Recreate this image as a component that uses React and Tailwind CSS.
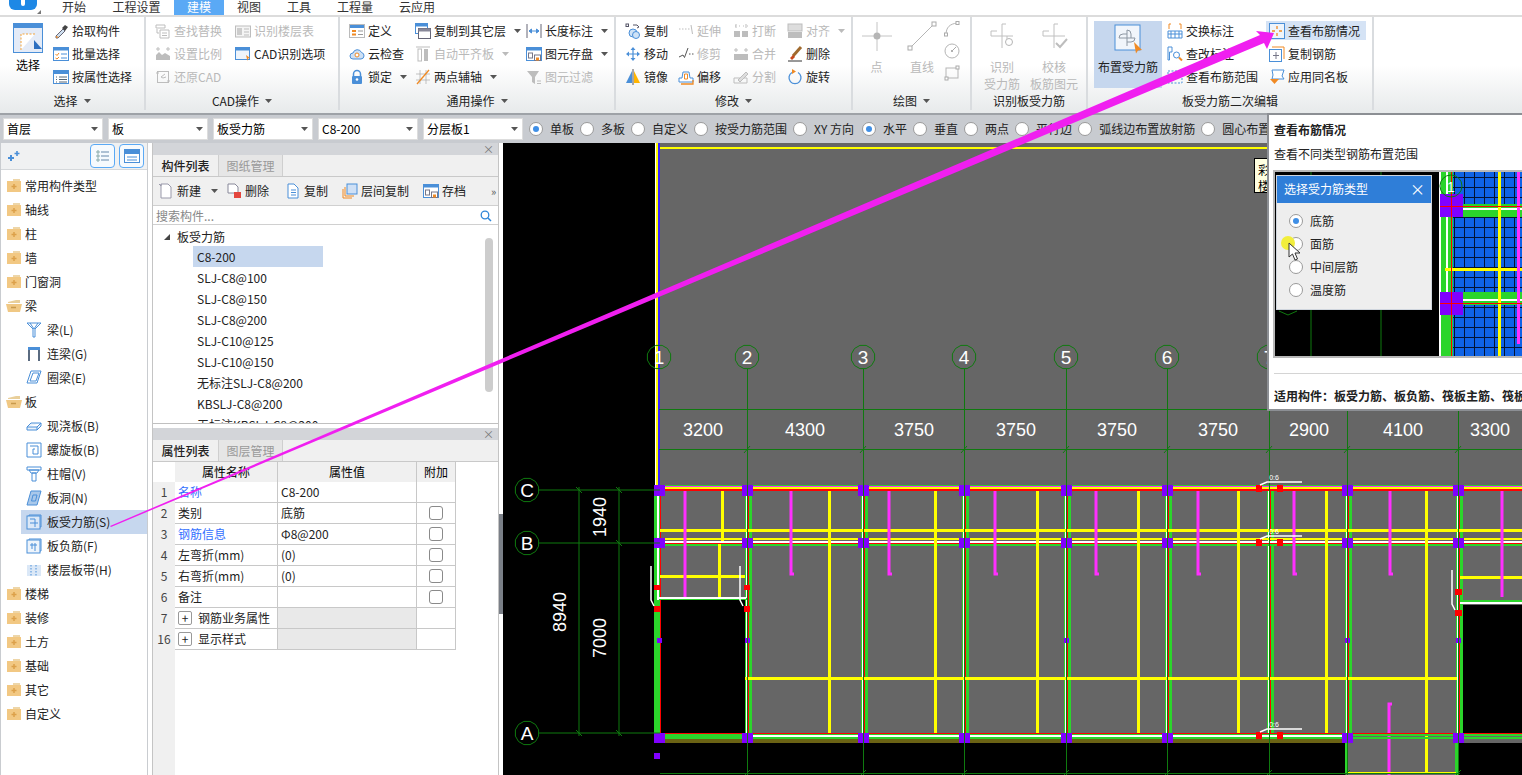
const B = "#4a8fd8";
const O = "#f08a24";
const G = "#bdbdbd";

const paths = {
  pick: <><path d="M3 13l7-7 2 2-7 7H3z" fill="#cfe0f0" stroke="#667" /><path d="M9 5l3-3 3 2-3 4z" fill="#444" /><path d="M3 13l3 1-3 1z" fill={O} /></>,
  batch: <><rect x=".5" y="1.5" width="15" height="13" fill="#fff" stroke={B} /><rect x=".5" y="1.5" width="15" height="3" fill={B} /><path d="M2.5 8l1.5 1.5L6 7M2.5 12l1.5 1L6 11" stroke={O} fill="none" /><path d="M8 8h6M8 12h6" stroke={B} /></>,
  attr: <><rect x=".5" y="1.5" width="15" height="13" fill="#fff" stroke={B} /><rect x=".5" y="1.5" width="15" height="3.5" fill={B} /><path d="M3 8h1M3 10.5h1M3 13h1M6 8h8M6 10.5h8M6 13h8" stroke="#567" /></>,
  find: <><path d="M1 2h9v3H1z" fill="none" stroke={G} /><path d="M5 7h9v8H5z" fill="none" stroke={G} /><path d="M7 10h5M7 12.500h5" stroke={G} /><path d="M2 6v4h2" stroke={G} fill="none" /></>,
  table: <><rect x=".5" y="3" width="15" height="11" fill="#f4f4f4" stroke={G} /><rect x="2" y="5" width="5" height="7" fill="#ccc" /><path d="M9 6h5M9 9h5M9 12h5" stroke={G} /></>,
  scale: <><path d="M1 14V9l3-3 3 3 3-2 5 3v4z" fill={G} /><path d="M1 3h4M11 3h4M3 1v4M13 1v4" stroke={G} /></>,
  cadopt: <><rect x=".5" y="1.500" width="14" height="12" fill="#eef4fb" stroke={B} /><rect x=".5" y="1.500" width="14" height="3" fill={B} /><path d="M11 9l4 3-2 .5-.5 2.500z" fill={O} /></>,
  restore: <><rect x="2.500" y="2.500" width="11" height="11" fill="none" stroke={G} /><path d="M1 4h3M12 12h3M10 5L6 8l2 1 3-1" stroke={G} fill="none" /></>,
  define: <><rect x=".5" y="1.500" width="15" height="13" fill="#fff" stroke="#bbb" /><rect x="1" y="2" width="14" height="3" fill={B} /><rect x="3" y="7" width="4" height="2" fill={O} /><rect x="3" y="10.500" width="4" height="2" fill={O} /><path d="M9 8h5M9 11.500h5" stroke="#999" /></>,
  cloud: <><path d="M4 13a3 3 0 010-6 4.500 4.500 0 018.500-.5 3.300 3.300 0 01-.5 6.500z" fill="#cde0f5" stroke={B} /><circle cx="8" cy="9" r="2" fill="#fff" stroke={O} /></>,
  lock: <><path d="M4.500 7V5a3.500 3.500 0 017 0v2" fill="none" stroke={B} strokeWidth="1.500" /><rect x="3" y="7" width="10" height="8" rx="1" fill={B} /><circle cx="8" cy="10.500" r="1.300" fill="#fff" /></>,
  copyf: <><rect x=".5" y=".5" width="12" height="10" fill="#fff" stroke={B} /><rect x=".5" y=".5" width="12" height="3" fill={B} /><rect x="3.500" y="5.500" width="12" height="10" fill="#fff" stroke="#667" /><rect x="3.500" y="5.500" width="12" height="3" fill="#889" /></>,
  align: <><path d="M1 1h14" stroke={G} /><rect x="3" y="3" width="3.500" height="12" fill="#fff" stroke={G} /><rect x="9" y="3" width="4" height="12" fill={G} /></>,
  axis: <><path d="M1 5h14M1 11h14M5 1v14M11 1v14" stroke="#aaa" strokeWidth=".7" /><path d="M2 15L14 1" stroke={O} strokeWidth="1.300" /></>,
  dim: <><path d="M1 1v14M15 1v14" stroke="#667" /><path d="M3 8h10M3 8l2.500-2v4zM13 8l-2.500-2v4z" fill={B} stroke={B} /></>,
  save: <><rect x=".5" y="1.500" width="15" height="13" fill="#fff" stroke={B} /><rect x=".5" y="1.500" width="15" height="3" fill={B} /><rect x="2.500" y="7" width="4" height="5" fill="none" stroke="#778" /><rect x="8.500" y="9" width="6" height="5.500" fill="#fff" stroke="#778" /><rect x="10" y="11.500" width="3" height="3" fill={O} /></>,
  filter: <><path d="M1 2h12L9 8v7l-3-2V8z" fill={G} /><path d="M11 12h4M11 14.500h4" stroke={G} /></>,
  copy: <><circle cx="8" cy="10" r="4" fill="#cfe3f7" stroke={B} /><circle cx="11" cy="12" r="3.500" fill="#cfe3f7" stroke={B} /><rect x="1" y="1" width="2.500" height="2.500" fill="none" stroke="#556" /><path d="M8 2h4l2 2M14 4l-2 1" stroke="#556" fill="none" /></>,
  extend: <path d="M1 6h1.500M4 6h1.500M7 6h1.500M10 6h1.500M13 2l1.500 9" stroke={G} fill="none" />,
  trim: <path d="M1 11l4-2 1.500 2.500L10 2M11 8h1.500M14 8h1.500" stroke="#555" fill="none" />,
  brk: <><path d="M2 3h1M6 3h1M10 3h1M14 3h1M3 1v4M13 1v4" stroke={G} /><rect x="1" y="8" width="6" height="6" fill={G} /><rect x="9" y="8" width="6" height="6" fill={G} /></>,
  merge: <><path d="M3 2v4M13 2v4M1 4h4M11 4h4" stroke={G} /><rect x="1" y="8" width="14" height="6" fill={G} /></>,
  alignr: <><rect x="1" y="1" width="14" height="7" fill="#ddd" stroke={G} /><rect x="1" y="9" width="14" height="6" fill={G} /></>,
  del: <><path d="M14 1L6 10" stroke="#a06a2e" strokeWidth="3" /><path d="M6 9l2 2-3 3-2-2z" fill="#c8491c" /><path d="M1 15h14" stroke="#333" /></>,
  move: <><path d="M8 1l2.500 3h-5zM8 15l2.500-3h-5zM1 8l3-2.500v5zM15 8l-3-2.500v5z" fill={B} /><path d="M4 8h8M8 4v8" stroke={B} strokeWidth="1.200" /></>,
  mirror: <><path d="M7 2v12H1z" fill={B} /><path d="M9 2v12h6z" fill="#ffb400" /><path d="M8 0v16" stroke="#555" /></>,
  offset: <><path d="M1 13V9h3l1-6h6l1 6h3v4z" fill="#fff" stroke={B} /><path d="M3 15h12V11" fill="none" stroke={O} strokeWidth="1.300" /><path d="M6.500 5h3v5h-3z" fill="none" stroke={O} /></>,
  split: <><path d="M1 9h13v5H1z" fill="none" stroke={G} /><path d="M5 11L13 3l2 2-8 8z" fill="#ddd" stroke={G} /></>,
  rotate: <><path d="M5 3.500a6 6 0 106 0" fill="none" stroke={B} strokeWidth="1.300" /><path d="M5 0l4 2.500-4 2.500z" fill={O} /></>,
  swap: <><path d="M1 8h14v7H1zM1 11h14M4 8v7M8 8v7M12 8v7" fill="#fff" stroke={B} /><path d="M2 6V1h2M14 6V1h-2" stroke={O} fill="none" /></>,
  chk: <><path d="M1 1h4v5H2.500v8H1z" fill="#fff" stroke={B} /><circle cx="9.500" cy="9" r="3" fill="#fff" stroke={B} /><path d="M12 11.500l3 3" stroke={O} strokeWidth="2" /></>,
  range: <><rect x="1" y="2" width="14" height="12" fill="none" stroke={B} strokeDasharray="2 1.500" /><path d="M8 5v6M5 8h6" stroke="#889" /></>,
  view: <><rect x=".5" y=".5" width="15" height="15" fill="#eef4fb" stroke={B} /><path d="M8 3v3M8 10v3M3 8h3M10 8h3" stroke={O} strokeWidth="1.300" /></>,
  copyr: <><path d="M3 1h12v12" fill="none" stroke={O} /><rect x=".5" y="3.500" width="12" height="12" fill="#fff" stroke={B} /><path d="M7 6v7M4 9.500h6" stroke="#778" /></>,
  apply: <><path d="M3 1h12l-2 6 2 3H3l1-4z" fill="#fff" stroke={B} /><path d="M1 10h9l-4.500 5z" fill={O} /></>,
};

function Icon({ name }) {
  return (
    <svg viewBox="0 0 16 16" className="w-4 h-4 shrink-0">
      {paths[name]}
    </svg>
  );
}

function Caret({ color = "#555" }) {
  return (
    <svg width="7" height="4" className="shrink-0">
      <path d="M0 0h7L3.500 4z" fill={color} />
    </svg>
  );
}

function Item({ icon, label, off, caret, active }) {
  return (
    <div className={`flex items-center gap-[3px] whitespace-nowrap ${off ? "text-[#b9b9b9]" : "text-[#222]"} ${active ? "bg-[#d5e3f5] -ml-[3px] pl-[3px] w-[100px] h-[19px] my-[2px]" : "h-[23px]"}`}>
      <Icon name={icon} />
      <span>{label}</span>
      {caret && <span className="ml-[5px] flex"><Caret color={off ? "#bbb" : "#555"} /></span>}
    </div>
  );
}

function Col({ w, items }) {
  return (
    <div className={`flex flex-col pt-[2px] ${w}`}>
      {items.map((it) => (
        <Item key={it.label} {...it} />
      ))}
    </div>
  );
}

function Group({ w, label, caret = true, children }) {
  return (
    <div className={`${w} h-[93px] border-r-2 border-[#d9dcdf] flex flex-col shrink-0`}>
      <div className="h-[75px] flex">{children}</div>
      <div className="h-[18px] flex items-center justify-center gap-[6px] text-[#222]">
        <span>{label}</span>
        {caret && <Caret />}
      </div>
    </div>
  );
}

function BigDraw({ w, label, children, off = true }) {
  return (
    <div className={`${w} flex flex-col items-center pt-[4px] ${off ? "text-[#b9b9b9]" : "text-[#222]"}`}>
      <svg width="34" height="32" viewBox="0 0 34 32" className="shrink-0">
        {children}
      </svg>
      <div className="mt-[5px] leading-[17px] text-center whitespace-pre-line">{label}</div>
    </div>
  );
}

function Ribbon() {
  return (
    <div className="h-[98px] flex border-t-2 border-[#dcdcdc] bg-gradient-to-b from-white via-white to-[#e7eaeb] shrink-0">
      <Group w="w-[146px]" label="选择">
        <div className="w-[53px] pl-[3px] pt-[6px] flex flex-col items-center">
          <svg width="30" height="30" viewBox="0 0 30 30" className="shrink-0">
            <rect x=".5" y=".5" width="29" height="29" fill="#e4ebf7" stroke={B} />
            <rect x="1" y="1" width="28" height="4" fill={B} />
            <path d="M8 27V11h14" fill="#fff" stroke="#f3a33a" strokeDasharray="2 1.500" />
            <path d="M21 17l8 9h-8z" fill="#2d6fc0" />
          </svg>
          <span className="mt-[6px]">选择</span>
        </div>
        <Col w="w-[90px]" items={[{ icon: "pick", label: "拾取构件" }, { icon: "batch", label: "批量选择" }, { icon: "attr", label: "按属性选择" }]} />
      </Group>
      <Group w="w-[194px]" label="CAD操作">
        <div className="w-[9px]" />
        <Col w="w-[80px]" items={[{ icon: "find", label: "查找替换", off: true }, { icon: "scale", label: "设置比例", off: true }, { icon: "restore", label: "还原CAD", off: true }]} />
        <Col w="w-[100px]" items={[{ icon: "table", label: "识别楼层表", off: true }, { icon: "cadopt", label: "CAD识别选项" }]} />
      </Group>
      <Group w="w-[276px]" label="通用操作">
        <div className="w-[9px]" />
        <Col w="w-[66px]" items={[{ icon: "define", label: "定义" }, { icon: "cloud", label: "云检查" }, { icon: "lock", label: "锁定", caret: true }]} />
        <Col w="w-[111px]" items={[{ icon: "copyf", label: "复制到其它层", caret: true }, { icon: "align", label: "自动平齐板", off: true, caret: true }, { icon: "axis", label: "两点辅轴", caret: true }]} />
        <Col w="w-[88px]" items={[{ icon: "dim", label: "长度标注", caret: true }, { icon: "save", label: "图元存盘", caret: true }, { icon: "filter", label: "图元过滤", off: true }]} />
      </Group>
      <Group w="w-[237px]" label="修改">
        <div className="w-[9px]" />
        <Col w="w-[53px]" items={[{ icon: "copy", label: "复制" }, { icon: "move", label: "移动" }, { icon: "mirror", label: "镜像" }]} />
        <Col w="w-[55px]" items={[{ icon: "extend", label: "延伸", off: true }, { icon: "trim", label: "修剪", off: true }, { icon: "offset", label: "偏移" }]} />
        <Col w="w-[54px]" items={[{ icon: "brk", label: "打断", off: true }, { icon: "merge", label: "合并", off: true }, { icon: "split", label: "分割", off: true }]} />
        <Col w="w-[60px]" items={[{ icon: "alignr", label: "对齐", off: true, caret: true }, { icon: "del", label: "删除" }, { icon: "rotate", label: "旋转" }]} />
      </Group>
      <Group w="w-[119px]" label="绘图">
        <BigDraw w="w-[47px]" label="点">
          <path d="M2 15h30M17 1v29" stroke="#c4c4c4" />
          <circle cx="17" cy="15" r="3.500" fill="#b5b5b5" />
        </BigDraw>
        <BigDraw w="w-[44px]" label="直线">
          <path d="M5 27L29 3" stroke="#b5b5b5" />
          <rect x="3" y="25" width="4" height="4" fill="#fff" stroke="#aaa" />
          <rect x="27" y="1" width="4" height="4" fill="#fff" stroke="#aaa" />
        </BigDraw>
        <div className="w-[20px] flex flex-col gap-[6px] pt-[4px]">
          <svg width="16" height="16" viewBox="0 0 16 16"><path d="M2 14C2 6 6 3 13 2" fill="none" stroke="#b5b5b5" /><rect x="12" y="0.500" width="3" height="3" fill="#fff" stroke="#aaa" /><rect x="0.500" y="12" width="3" height="3" fill="#fff" stroke="#aaa" /></svg>
          <svg width="16" height="16" viewBox="0 0 16 16"><circle cx="8" cy="8" r="7" fill="none" stroke="#b5b5b5" /><circle cx="8" cy="8" r="1" fill="#999" /><path d="M8 8l4-4" stroke="#aaa" /></svg>
          <svg width="16" height="16" viewBox="0 0 16 16"><rect x="2" y="3" width="12" height="10" fill="none" stroke="#b5b5b5" /><rect x="12" y="1" width="3" height="3" fill="#fff" stroke="#aaa" /><rect x="1" y="12" width="3" height="3" fill="#fff" stroke="#aaa" /></svg>
        </div>
      </Group>
      <Group w="w-[116px]" label="识别板受力筋" caret={false}>
        <div className="w-[4px]" />
        <BigDraw w="w-[52px]" label={"识别\n受力筋"}>
          <path d="M17 3v24M6 15h22M17 3h4M6 15v-5h6M22 15v8" stroke="#c0c0c0" fill="none" />
          <circle cx="24" cy="21" r="3.500" fill="#fff" stroke="#b5b5b5" />
        </BigDraw>
        <BigDraw w="w-[52px]" label={"校核\n板筋图元"}>
          <path d="M17 3v24M6 15h22M17 3h4M6 15v-5h6" stroke="#c0c0c0" fill="none" />
          <path d="M19 22l4 4 7-8" stroke="#bdbdbd" strokeWidth="2" fill="none" />
        </BigDraw>
      </Group>
      <Group w="w-[286px]" label="板受力筋二次编辑" caret={false}>
        <div className="ml-[6px] mt-[4px] w-[68px] h-[67px] bg-[#c6d7ee] flex flex-col items-center pt-[3px] text-[#222] shrink-0">
          <svg width="30" height="30" viewBox="0 0 30 30" className="shrink-0 overflow-visible">
            <rect x="2" y="1" width="25" height="25" fill="#f1f5fb" stroke={B} />
            <path d="M14 6v16M6 14h16M14 6a4 4 0 014 4v4M6 14a4 4 0 014-4h4M22 14a4 4 0 01-4 4h-4" fill="none" stroke="#8d97a3" />
            <path d="M21 18l8 8-4 .5-2 3z" fill={O} />
          </svg>
          <span className="mt-[7px]">布置受力筋</span>
        </div>
        <div className="w-[5px]" />
        <Col w="w-[102px]" items={[{ icon: "swap", label: "交换标注" }, { icon: "chk", label: "查改标注" }, { icon: "range", label: "查看布筋范围" }]} />
        <Col w="w-[100px]" items={[{ icon: "view", label: "查看布筋情况", active: true }, { icon: "copyr", label: "复制钢筋" }, { icon: "apply", label: "应用同名板" }]} />
      </Group>
      <div className="flex-1" />
    </div>
  );
}

function Radio({ on }) {
  return (
    <span className="w-[14px] h-[14px] rounded-full bg-white border border-[#9a9a9a] flex items-center justify-center shrink-0">
      {on ? <span className="w-[6px] h-[6px] rounded-full bg-[#3f8fe6]" /> : null}
    </span>
  );
}

function Toolbar() {
  const selects = ["首层", "板", "板受力筋", "C8-200", "分层板1"];
  const radios = [["单板", true], ["多板"], ["自定义"], ["按受力筋范围"], ["XY 方向", false, "w-[42px]"], ["水平", true], ["垂直"], ["两点"], ["平行边"], ["弧线边布置放射筋"], ["圆心布置放射筋"]];
  return (
    <div className="h-[30px] bg-[#c8cbd0] border-t-2 border-[#9ea2a7] flex items-center pl-[3px] shrink-0 overflow-hidden">
      <div className="flex gap-[5px] mr-[6px]">
        {selects.map((s) => (
          <div key={s} className="w-[100px] h-[22px] bg-white border border-[#dddddd] flex items-center justify-between pl-[3px] pr-[4px]">
            <span>{s}</span>
            <Caret />
          </div>
        ))}
      </div>
      <div className="w-[738px] flex gap-[6px] whitespace-nowrap overflow-hidden">
        {radios.map(([r, on, w]) => (
          <div key={r} className="flex items-center gap-[7px]">
            <Radio on={on} />
            <span className={`text-[#222] ${w || ""}`}>{r}</span>
          </div>
        ))}
      </div>
    </div>
  );
}

function Folder({ open }) {
  return open ? (
    <svg width="16" height="14" viewBox="0 0 16 14" className="shrink-0">
      <path d="M2 3l8-2h4v3H2z" fill="#e9cf9a" />
      <path d="M0 5h16l-2 8H2z" fill="#f0c884" />
      <path d="M5 8.500h5" stroke="#c99a4c" strokeWidth="1.500" />
    </svg>
  ) : (
    <svg width="16" height="14" viewBox="0 0 16 14" className="shrink-0">
      <path d="M7 0h7v3H7z" fill="#eed6a8" />
      <rect x="1" y="2" width="14" height="11" fill="#f2c883" />
      <path d="M8 5v5M5.500 7.500h5" stroke="#dca04a" strokeWidth="1.500" />
    </svg>
  );
}

const treeIcons = {
  "梁(L)": <path d="M1 1h14L9 7v8H7V7zM4 1l4 6 4-6" fill="none" stroke={B} />,
  "连梁(G)": <><rect x="2" y="1" width="12" height="3" fill={B} /><path d="M3 4v11M13 4v11" stroke="#5a6b80" strokeWidth="2" /></>,
  "圈梁(E)": <path d="M5 1h10l-4 12H1zM7 3h6l-3 8H4z" fill="#fff" stroke={B} fillRule="evenodd" />,
  "现浇板(B)": <path d="M1 9l4-4h10v3l-4 4H1zM1 9h10l4-4M11 9v3" fill="#eaf2fb" stroke={B} />,
  "螺旋板(B)": <path d="M1 1h14v14H1zM4 4h8v8H7V7h2" fill="none" stroke={B} />,
  "柱帽(V)": <path d="M1 1h14v3H1zM3 4h10l-2 3H5zM6 7h4v8H6z" fill="#fff" stroke={B} />,
  "板洞(N)": <path d="M5 1h10l-4 14H1zM7 5h4l-1.500 6h-4z" fill="#a9c8ea" stroke={B} />,
  "板受力筋(S)": <><rect x="1" y="2" width="13" height="13" fill="#dbe8f7" stroke={B} /><path d="M3 2V1h12v12h-1M4 9h8M9 5v8M4 5h5" stroke={B} fill="none" /></>,
  "板负筋(F)": <><rect x="1" y="2" width="13" height="13" fill="#eef4fb" stroke={B} /><path d="M3 2V1h12v12h-1M4 7h7M6 5v6M9 5v8" stroke={B} fill="none" /></>,
  "楼层板带(H)": <><rect x="1" y="3" width="14" height="11" fill="#dbe8f7" /><path d="M5 3v11M10 3v11" stroke={B} strokeDasharray="1.500 1.500" /></>,
};

function TreeRow({ label, folder, open }) {
  const selected = label === "板受力筋(S)";
  if (folder) {
    return (
      <div className="h-[24px] flex items-center gap-[3px] pl-[5px]">
        <Folder open={open} />
        <span className="text-[#222]">{label}</span>
      </div>
    );
  }
  return (
    <div className={`h-[24px] ml-[20px] flex items-center gap-[5px] pl-[5px] ${selected ? "bg-[#c6d7ee]" : ""}`}>
      <svg viewBox="0 0 16 16" className="w-4 h-4 shrink-0">{treeIcons[label]}</svg>
      <span className="text-[#222]">{label}</span>
    </div>
  );
}

function Sidebar() {
  const rows = [["常用构件类型", 1], ["轴线", 1], ["柱", 1], ["墙", 1], ["门窗洞", 1], ["梁", 1, 1], ["梁(L)"], ["连梁(G)"], ["圈梁(E)"], ["板", 1, 1], ["现浇板(B)"], ["螺旋板(B)"], ["柱帽(V)"], ["板洞(N)"], ["板受力筋(S)"], ["板负筋(F)"], ["楼层板带(H)"], ["楼梯", 1], ["装修", 1], ["土方", 1], ["基础", 1], ["其它", 1], ["自定义", 1]];
  return (
    <div className="w-[148px] h-full border-l border-r border-[#c9ccd0] bg-white shrink-0">
      <div className="h-[27px] bg-[#f0f1f2] border-b border-[#d5d8db] flex items-center justify-between pl-[6px] pr-[3px]">
        <svg width="14" height="12" viewBox="0 0 14 12">
          <path d="M4 5v6M1 8h6" stroke={B} strokeWidth="2" />
          <path d="M10 1v5M7.500 3.500h5" stroke={B} strokeWidth="1.600" />
        </svg>
        <div className="flex gap-[4px]">
          <div className="w-[25px] h-[24px] rounded-[4px] border border-[#5aa9f5] bg-[#f6fafe] flex items-center justify-center">
            <svg width="14" height="14" viewBox="0 0 14 14"><path d="M1 2h2v2H1zM1 6h2v2H1zM1 10h2v2H1z" fill="none" stroke="#8aa" /><path d="M5 3h8M5 7h8M5 11h8" stroke="#68a" /></svg>
          </div>
          <div className="w-[25px] h-[24px] rounded-[4px] border border-[#5aa9f5] bg-[#f6fafe] flex items-center justify-center">
            <svg width="16" height="14" viewBox="0 0 16 14"><rect x=".5" y=".5" width="15" height="13" fill="#fff" stroke={B} /><rect x="1" y="1" width="14" height="4" fill={B} /><path d="M3 8h10M3 11h10" stroke={B} /></svg>
          </div>
        </div>
      </div>
      <div className="pt-[4px]">
        {rows.map(([l, f, o]) => (
          <TreeRow key={l} label={l} folder={f} open={o} />
        ))}
      </div>
    </div>
  );
}

function PanelHead({ tabs }) {
  return (
    <>
      <div className="h-[12px] bg-[#d3d5d9] flex items-center justify-end pr-[4px] text-[#777] text-[11px] leading-none shrink-0">×</div>
      <div className="h-[22px] bg-[#f0f0f0] border-b border-[#c9c9c9] flex shrink-0">
        <div className="w-[65px] flex items-center justify-center font-medium text-[#222]">{tabs[0]}</div>
        <div className="w-[65px] border-l border-r border-[#cfcfcf] bg-[#e6e6e6] flex items-center justify-center text-[#999]">{tabs[1]}</div>
      </div>
    </>
  );
}

function ListPanel() {
  const items = ["C8-200", "SLJ-C8@100", "SLJ-C8@150", "SLJ-C8@200", "SLJ-C10@125", "SLJ-C10@150", "无标注SLJ-C8@200", "KBSLJ-C8@200", "无标注KBSLJ-C8@200"];
  const tools = [
    ["新建", "w-[68px]", <path d="M3 1h7l3 3v11H3zM1 1l2 2M3 1v2" fill="#fff" stroke="#99a" />, true],
    ["删除", "w-[59px]", <><path d="M2 1h7l3 3v6H2z" fill="#fff" stroke="#889" /><rect x="8" y="9" width="7" height="6" fill="#e4463e" /></>],
    ["复制", "w-[57px]", <path d="M3 1h6l4 4v10H3zM6 7h5M6 9.500h5M6 12h5" fill="#fff" stroke={B} />],
    ["层间复制", "w-[81px]", <><rect x="5" y="1" width="10" height="10" fill="#cfe0f5" stroke={B} /><path d="M1 6v9h9M3 4v9h9" fill="none" stroke={O} /></>],
    ["存档", "w-[68px]", paths.save],
  ];
  return (
    <div className="h-[281px] flex flex-col border-b border-[#c0c0c0] bg-white shrink-0">
      <PanelHead tabs={["构件列表", "图纸管理"]} />
      <div className="h-[29px] bg-[#f0f0f0] border-b border-[#d0d0d0] flex items-center pl-[5px] shrink-0">
        {tools.map(([l, w, ic, c]) => (
          <div key={l} className={`${w} flex items-center gap-[3px] text-[#222]`}>
            <svg viewBox="0 0 16 16" className="w-4 h-4 shrink-0">{ic}</svg>
            <span>{l}</span>
            {c && <span className="ml-[7px] flex"><Caret /></span>}
          </div>
        ))}
        <span className="text-[#555] text-[11px] leading-none">»</span>
      </div>
      <div className="h-[19px] border-b border-[#d0d0d0] flex items-center justify-between pl-[3px] pr-[6px] pt-[2px] text-[#888] shrink-0">
        <span>搜索构件...</span>
        <svg width="12" height="12" viewBox="0 0 12 12"><circle cx="5" cy="5" r="3.800" fill="none" stroke="#2f86d8" strokeWidth="1.300" /><path d="M8 8l3 3" stroke="#2f86d8" strokeWidth="1.500" /></svg>
      </div>
      <div className="flex-1 relative overflow-hidden text-[#222]">
        <div className="h-[21px] pt-[3px] flex items-center pl-[11px] gap-[7px]">
          <svg width="6" height="6"><path d="M6 0v6H0z" fill="#444" /></svg>
          <span>板受力筋</span>
        </div>
        {items.map((t, i) => (
          <div key={t} className={`h-[21px] ml-[40px] w-[130px] pl-[4px] flex items-center whitespace-nowrap ${i === 0 ? "bg-[#c6d7ee]" : ""}`}>{t}</div>
        ))}
        <div className="absolute right-[5px] top-[13px] w-[8px] h-[154px] rounded-[4px] bg-[#cdcdcd]" />
      </div>
    </div>
  );
}

function PropRow({ no, name, value, blue, box, group }) {
  return (
    <div className="h-[21px] flex">
      <div className="w-[22px] shrink-0 bg-[#f0f0f0] flex items-center justify-center text-[#444] border-b border-[#f0f0f0]">{no}</div>
      <div className={`w-[103px] shrink-0 border-b border-r border-[#c8c8c8] flex items-center pl-[3px] ${blue ? "text-[#3370ff]" : "text-[#222]"}`}>
        {group && <span className="w-[14px] h-[14px] mr-[6px] border border-[#999] rounded-[2px] flex items-center justify-center leading-none">+</span>}
        {name}
      </div>
      <div className={`w-[139px] shrink-0 border-b border-r border-[#c8c8c8] flex items-center pl-[3px] text-[#222] ${group ? "bg-[#e9e9e9]" : ""}`}>{value}</div>
      <div className="w-[39px] shrink-0 border-b border-r border-[#c8c8c8] flex items-center justify-center">
        {box && <span className="w-[14px] h-[14px] rounded-[3px] border border-[#8a8a8a] bg-white" />}
      </div>
    </div>
  );
}

function PropPanel() {
  return (
    <div className="flex-1 flex flex-col bg-white min-h-0">
      <PanelHead tabs={["属性列表", "图层管理"]} />
      <div className="h-[20px] flex shrink-0">
        <div className="w-[22px] bg-white" />
        <div className="w-[103px] bg-[#f0f0f0] border-r border-[#c8c8c8] flex items-center justify-center">属性名称</div>
        <div className="w-[139px] bg-[#f0f0f0] border-r border-[#c8c8c8] flex items-center justify-center">属性值</div>
        <div className="w-[39px] bg-[#f0f0f0] border-r border-[#c8c8c8] flex items-center justify-center">附加</div>
      </div>
      <PropRow no="1" name="名称" value="C8-200" blue />
      <PropRow no="2" name="类别" value="底筋" box />
      <PropRow no="3" name="钢筋信息" value="Φ8@200" blue box />
      <PropRow no="4" name="左弯折(mm)" value="(0)" box />
      <PropRow no="5" name="右弯折(mm)" value="(0)" box />
      <PropRow no="6" name="备注" value="" box />
      <PropRow no="7" name="钢筋业务属性" value="" group />
      <PropRow no="16" name="显示样式" value="" group />
      <div className="flex-1 w-[22px] bg-[#f0f0f0]" />
    </div>
  );
}

const AX = [747, 863, 964, 1066, 1167, 1269, 1347, 1458];
const YEL = [829, 935, 1037, 1138, 1238, 1326];
const MAG = [791, 889, 995, 1096, 1198, 1294, 1390];
const DIMS = [[703, "3200"], [805, "4300"], [914, "3750"], [1016, "3750"], [1117, "3750"], [1218, "3750"], [1309, "2900"], [1403, "4100"], [1490, "3300"]];
const GD = "#0f7a0f";
const numCls = "font-['Liberation_Sans',sans-serif]";

function Octa({ x, y, t }) {
  const pts = [];
  for (let i = 0; i < 12; i++) {
    const a = (Math.PI / 6) * i + Math.PI / 12;
    pts.push(`${(x + 12 * Math.cos(a)).toFixed(1)},${(y + 12 * Math.sin(a)).toFixed(1)}`);
  }
  return (
    <g>
      <polygon points={pts.join(" ")} fill="none" stroke={GD} />
      <text x={x} y={y + 7} textAnchor="middle" fill="#fff" fontSize="19" className={numCls}>{t}</text>
    </g>
  );
}

function Leader({ y }) {
  return (
    <g>
      <rect x="1256" y={y + 1} width="6" height="7" fill="#f00" />
      <rect x="1277" y={y + 1} width="6" height="7" fill="#f00" />
      <path d={`M1260 ${y + 1}l7-3h35`} fill="none" stroke="#fff" strokeWidth="1.500" />
      <text x="1274" y={y - 4} textAnchor="middle" fill="#fff" fontSize="7" className={numCls}>0:6</text>
    </g>
  );
}

function Drawing() {
  return (
    <svg viewBox="503 143 1019 632" width="1019" height="632" className="block">
      <rect x="503" y="143" width="1019" height="632" fill="#000" />
      <rect x="659" y="143" width="863" height="600" fill="#666" />
      <rect x="1345" y="743" width="113" height="32" fill="#666" />
      <rect x="661" y="600" width="84" height="133" fill="#000" />
      <rect x="1462" y="605" width="60" height="128" fill="#000" />

      <rect x="660" y="147" width="862" height="2" fill="#ffff00" />
      <rect x="655" y="143" width="1" height="347" fill="#fff" />
      <rect x="656" y="143" width="2" height="347" fill="#ffff00" />
      <rect x="658" y="143" width="2" height="347" fill="#3a22ff" />

      {AX.map((x) => (
        <g key={x}>
          <rect x={x - 2} y="491" width="7" height="244" fill="#2bd52b" />
          <rect x={x - 1} y="491" width="2" height="244" fill="#fff" />
          <rect x={x + 1} y="491" width="1" height="244" fill="#f00" />
        </g>
      ))}
      <rect x="654" y="491" width="6" height="248" fill="#2bd52b" />
      <rect x="657" y="491" width="2" height="109" fill="#fff" />
      <rect x="660" y="491" width="1" height="242" fill="#f00" />

      <rect x="660" y="529" width="862" height="3" fill="#ffff00" />
      <rect x="660" y="538" width="862" height="2" fill="#ffff00" />
      <rect x="655" y="541" width="867" height="2" fill="#fff" />
      <rect x="655" y="543" width="867" height="1" fill="#f00" />
      <rect x="655" y="544" width="867" height="2" fill="#2bd52b" />

      {YEL.map((x) => <rect key={x} x={x - 1} y="491" width="3" height="244" fill="#ffff00" />)}
      <rect x="1425" y="491" width="3" height="282" fill="#ffff00" />
      <rect x="721" y="491" width="3" height="50" fill="#ffff00" />
      <rect x="718" y="544" width="3" height="54" fill="#ffff00" />
      <rect x="660" y="575" width="85" height="3" fill="#ffff00" />
      <rect x="745" y="677" width="712" height="3" fill="#ffff00" />
      <rect x="1460" y="576" width="62" height="3" fill="#ffff00" />

      {MAG.map((x) => (
        <path key={x} d={`M${x} 491V574h3`} fill="none" stroke="#ff2fff" strokeWidth="3" />
      ))}
      <path d="M685 491V600" fill="none" stroke="#ff2fff" strokeWidth="3" />
      <path d="M1502 491V597" fill="none" stroke="#ff2fff" strokeWidth="3" />
      <path d="M1389 775V704h3" fill="none" stroke="#ff2fff" strokeWidth="3" />

      <rect x="660" y="598" width="88" height="2" fill="#2bd52b" />
      <rect x="658" y="597" width="88" height="2" fill="#fff" />
      <rect x="1462" y="600" width="60" height="2" fill="#2bd52b" />
      <rect x="1460" y="602" width="62" height="2" fill="#fff" />

      <rect x="655" y="485" width="867" height="1" fill="#2bd52b" />
      <rect x="655" y="486" width="867" height="1" fill="#ff2fff" />
      <rect x="655" y="487" width="867" height="2" fill="#ffff00" />
      <rect x="655" y="489" width="867" height="2" fill="#f00" />

      <rect x="654" y="733" width="868" height="1" fill="#f00" />
      <rect x="655" y="734" width="867" height="2" fill="#2bd52b" />
      <rect x="745" y="735" width="600" height="2" fill="#fff" />
      <rect x="655" y="737" width="867" height="2" fill="#2bd52b" />
      <rect x="665" y="739" width="680" height="4" fill="#6b6314" />
      <rect x="660" y="734" width="85" height="5" fill="#2bd52b" />

      <rect x="1345" y="743" width="2" height="30" fill="#2bd52b" />
      <rect x="1347" y="743" width="1" height="30" fill="#fff" />
      <rect x="1455" y="743" width="4" height="32" fill="#2bd52b" />
      <rect x="1348" y="772" width="108" height="2" fill="#ffff00" />

      {[659, 747, 863, 964, 1066, 1167, 1347, 1458].map((x) => (
        <g key={x} fill="#8000ff">
          <rect x={x - 5} y="485" width="11" height="11" />
          <rect x={x - 5} y="538" width="11" height="10" />
          <rect x={x - 5} y="733" width="11" height="10" />
        </g>
      ))}
      {[659, 747, 1066, 1347, 1458].map((x) => (
        <rect key={x} x={x - 2} y="638" width="5" height="5" fill="#8000ff" />
      ))}
      <rect x="654" y="753" width="6" height="6" fill="#8000ff" />

      <path d="M539 490H660M539 543H660M539 733H660" stroke={GD} />
      <path d="M579 487V736M619 487V736" stroke={GD} />
      <path d="M576 487l6 6M616 487l6 6M616 540l6 6M576 730l6 6M616 730l6 6" stroke={GD} />

      {AX.map((x) => <path key={x} d={`M${x + 0.5} 369V775`} stroke={GD} />)}
      <path d="M659 409.500H1522M659 449.500H1522M660 773.500H1460" stroke={GD} />
      {AX.map((x) => <path key={x} d={`M${x - 3} 453l6-7M${x - 3} 776l6-6`} stroke={GD} />)}

      {[[659, "1"], [747, "2"], [863, "3"], [964, "4"], [1066, "5"], [1167, "6"], [1269, "7"]].map(([x, t]) => (
        <Octa key={t} x={x} y={357} t={t} />
      ))}
      <Octa x={527} y={490} t="C" />
      <Octa x={527} y={543} t="B" />
      <Octa x={527} y={733} t="A" />

      {DIMS.map(([x, t]) => (
        <text key={x} x={x} y="436" textAnchor="middle" fill="#fff" fontSize="18" className={numCls}>{t}</text>
      ))}
      <text transform="translate(566 612) rotate(-90)" textAnchor="middle" fill="#fff" fontSize="18" className={numCls}>8940</text>
      <text transform="translate(606 517) rotate(-90)" textAnchor="middle" fill="#fff" fontSize="18" className={numCls}>1940</text>
      <text transform="translate(606 638) rotate(-90)" textAnchor="middle" fill="#fff" fontSize="18" className={numCls}>7000</text>

      <Leader y={484} />
      <Leader y={538} />
      <Leader y={731} />
      <path d="M651 566V600l3 6M740 566V600l3 6M1452 570V604l3 6" fill="none" stroke="#fff" strokeWidth="1.500" />
      <g fill="#f00">
        <rect x="654" y="585" width="6" height="5" />
        <rect x="654" y="606" width="6" height="6" />
        <rect x="744" y="585" width="6" height="5" />
        <rect x="744" y="606" width="6" height="6" />
        <rect x="1455" y="589" width="7" height="6" />
        <rect x="1455" y="610" width="7" height="6" />
      </g>
    </svg>
  );
}

function PopImage() {
  const vs = [];
  for (let x = 1454; x < 1522; x += 10) vs.push(x);
  const hs = [];
  for (let y = 177; y < 357; y += 10) hs.push(y);
  return (
    <svg viewBox="1275 172 247 184" width="247" height="184" className="block">
      <rect x="1275" y="172" width="247" height="184" fill="#000" />
      <path d="M1311 172V357M1381 172V357" stroke="#0f7a0f" />
      <rect x="1439" y="172" width="83" height="185" fill="#0f63e6" />
      {vs.map((x) => <path key={x} d={`M${x + 0.500} 172V357`} stroke="#041432" />)}
      {hs.map((y) => <path key={y} d={`M1452 ${y + 0.500}H1522`} stroke="#041432" />)}
      <rect x="1439" y="172" width="14" height="185" fill="#2bd52b" />
      <rect x="1439" y="172" width="2" height="185" fill="#fff" />
      <rect x="1446" y="172" width="2" height="120" fill="#fff" />
      <rect x="1440" y="204" width="82" height="13" fill="#2bd52b" />
      <rect x="1440" y="292" width="82" height="13" fill="#2bd52b" />
      <rect x="1446" y="208" width="76" height="2" fill="#fff" />
      <rect x="1440" y="299" width="82" height="2" fill="#fff" />
      <rect x="1440" y="194" width="23" height="23" fill="#8000ff" />
      <rect x="1440" y="292" width="23" height="23" fill="#8000ff" />
      <rect x="1498" y="172" width="3" height="185" fill="#ffff00" />
      <rect x="1445" y="268" width="77" height="3" fill="#ffff00" />
      <rect x="1517" y="172" width="3" height="172" fill="#ff2fff" />
      <path d="M1451.500 172V357M1440 206.500H1522M1440 303.500H1522" stroke="#f00" />
      <circle cx="1451" cy="186" r="11" fill="none" stroke="#0f7a0f" />
      <text x="1451" y="192" textAnchor="middle" fontSize="14" fill="#fff" className={numCls}>1</text>
      <path d="M1279 311l9 4 9-4" fill="none" stroke="#0f7a0f" />
    </svg>
  );
}

function Popover() {
  return (
    <div className="absolute left-[1267px] top-[113px] w-[255px] h-[298px] bg-white border-t-2 border-l-2 border-b-2 border-[#8c8f94] text-[#222] pl-[5px] flex flex-col">
      <div className="h-[29px] flex items-center pt-[1px] font-bold shrink-0">查看布筋情况</div>
      <div className="h-[19px] flex items-center shrink-0">查看不同类型钢筋布置范围</div>
      <div className="relative mt-[7px] -ml-[1px] border-2 border-[#b8b8b8] border-r-0 h-[188px] shrink-0">
        <PopImage />
        <div className="absolute left-[1px] top-[3px] w-[156px] h-[135px] bg-[#eeeeee] border border-[#cfd5dd] flex flex-col">
          <div className="h-[27px] bg-[#2f7ed8] text-white flex items-center justify-between pl-[7px] pr-[6px] pb-[2px] shrink-0">
            <span>选择受力筋类型</span>
            <span className="text-[15px] leading-none">×</span>
          </div>
          <div className="pl-[12px] pt-[6px]">
            {["底筋", "面筋", "中间层筋", "温度筋"].map((r, i) => (
              <div key={r} className="h-[23px] flex items-center gap-[7px]">
                <Radio on={i === 0} />
                <span>{r}</span>
              </div>
            ))}
          </div>
          <span className="absolute left-[4px] top-[60px] w-[14px] h-[14px] rounded-full bg-[#f2ee3c]" />
          <svg width="14" height="20" viewBox="0 0 14 20" className="absolute left-[11px] top-[66px]">
            <path d="M1 1v14l3.500-3 2.500 6 2.500-1-2.500-6h5z" fill="#fff" stroke="#333" />
          </svg>
        </div>
      </div>
      <div className="h-px bg-[#d4d4d4] mt-[15px] shrink-0" />
      <div className="flex-1 min-h-0 pt-[8px] flex items-center font-bold whitespace-nowrap overflow-hidden">适用构件：板受力筋、板负筋、筏板主筋、筏板负筋</div>
    </div>
  );
}

export default function App() {
  return (
    <div className="relative w-[1522px] h-[775px] overflow-hidden bg-white flex flex-col text-[12px] leading-none font-['Noto_Sans_CJK_SC',sans-serif]">
      <div className="h-[15px] flex shrink-0 bg-white">
        <div className="w-[49px] relative shrink-0">
          <div className="absolute left-[9px] top-0 w-[28px] h-[10px] bg-[#1e88e5] rounded-b-[6px] flex justify-center">
            <span className="w-[4px] h-[6px] bg-white rounded-b-[2px]" />
          </div>
          <svg width="4" height="4" className="absolute left-[37px] top-[10px]"><path d="M4 0v4H0z" fill="#777" /></svg>
        </div>
        {[["开始", "w-[50px]"], ["工程设置", "w-[75px]"], ["建模", "w-[50px]", "bg-[#5aa9f5] text-white"], ["视图", "w-[50px]"], ["工具", "w-[50px]"], ["工程量", "w-[62px]"], ["云应用", "w-[62px]"]].map(([t, w, c]) => (
          <div key={t} className={`${w} h-[15px] pb-[2px] flex items-center justify-center text-[#333] ${c || ""}`}>{t}</div>
        ))}
      </div>
      <Ribbon />
      <Toolbar />
      <div className="flex-1 flex min-h-0">
        <Sidebar />
        <div className="w-[4px] shrink-0 bg-white" />
        <div className="w-[347px] shrink-0 flex flex-col border-l border-r border-[#c4c4c4] bg-white">
          <ListPanel />
          <div className="h-[4px] bg-white shrink-0" />
          <PropPanel />
        </div>
        <div className="w-[4px] shrink-0 bg-white">
          <div className="mt-[371px] h-[100px] bg-[#7a7f87]" />
        </div>
        <div className="flex-1 overflow-hidden relative">
          <Drawing />
          <div className="absolute left-[751px] top-[15px] w-[20px] h-[35px] bg-[#ffffe1] border border-black text-[12px] pl-[3px] pt-[3px] leading-[16px]">彩<br />楼</div>
        </div>
      </div>
      <Popover />
      <svg width="1522" height="775" className="absolute left-0 top-0 pointer-events-none">
        <polygon points="110,526 1260,35 1256,31 1274,33 1267,49 1264,43 111,527" fill="#f01ff0" />
      </svg>
    </div>
  );
}
